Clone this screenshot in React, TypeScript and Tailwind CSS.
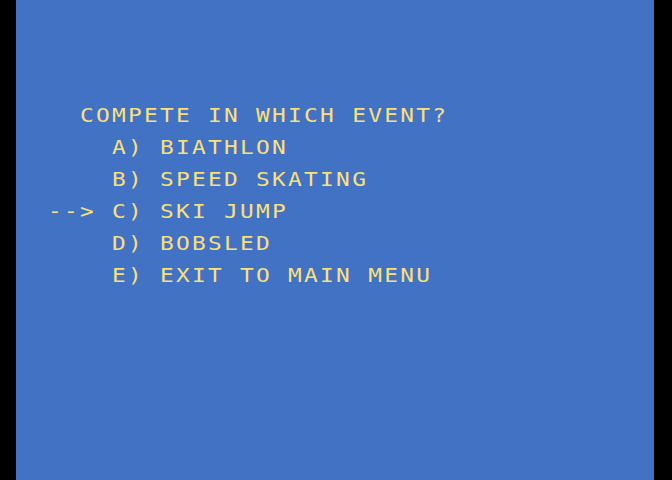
import React from "react";

const lines = [
  "  COMPETE IN WHICH EVENT?",
  "    A) BIATHLON",
  "    B) SPEED SKATING",
  "--> C) SKI JUMP",
  "    D) BOBSLED",
  "    E) EXIT TO MAIN MENU",
];

export default function App() {
  return (
    <div className="flex w-[672px] h-[480px] bg-black overflow-hidden">
      <div className="ml-[16px] w-[638px] h-full bg-[#4272c4] pl-[32px] pt-[99px] overflow-hidden">
        {lines.map((l, i) => (
          <div
            key={i}
            className="w-fit whitespace-pre origin-left scale-x-[1.2] text-[19px] leading-[32px] tracking-[1.9px] text-[#f8e07a]"
            style={{ fontFamily: '"DejaVu Sans Mono", monospace' }}
          >
            {l}
          </div>
        ))}
      </div>
    </div>
  );
}
